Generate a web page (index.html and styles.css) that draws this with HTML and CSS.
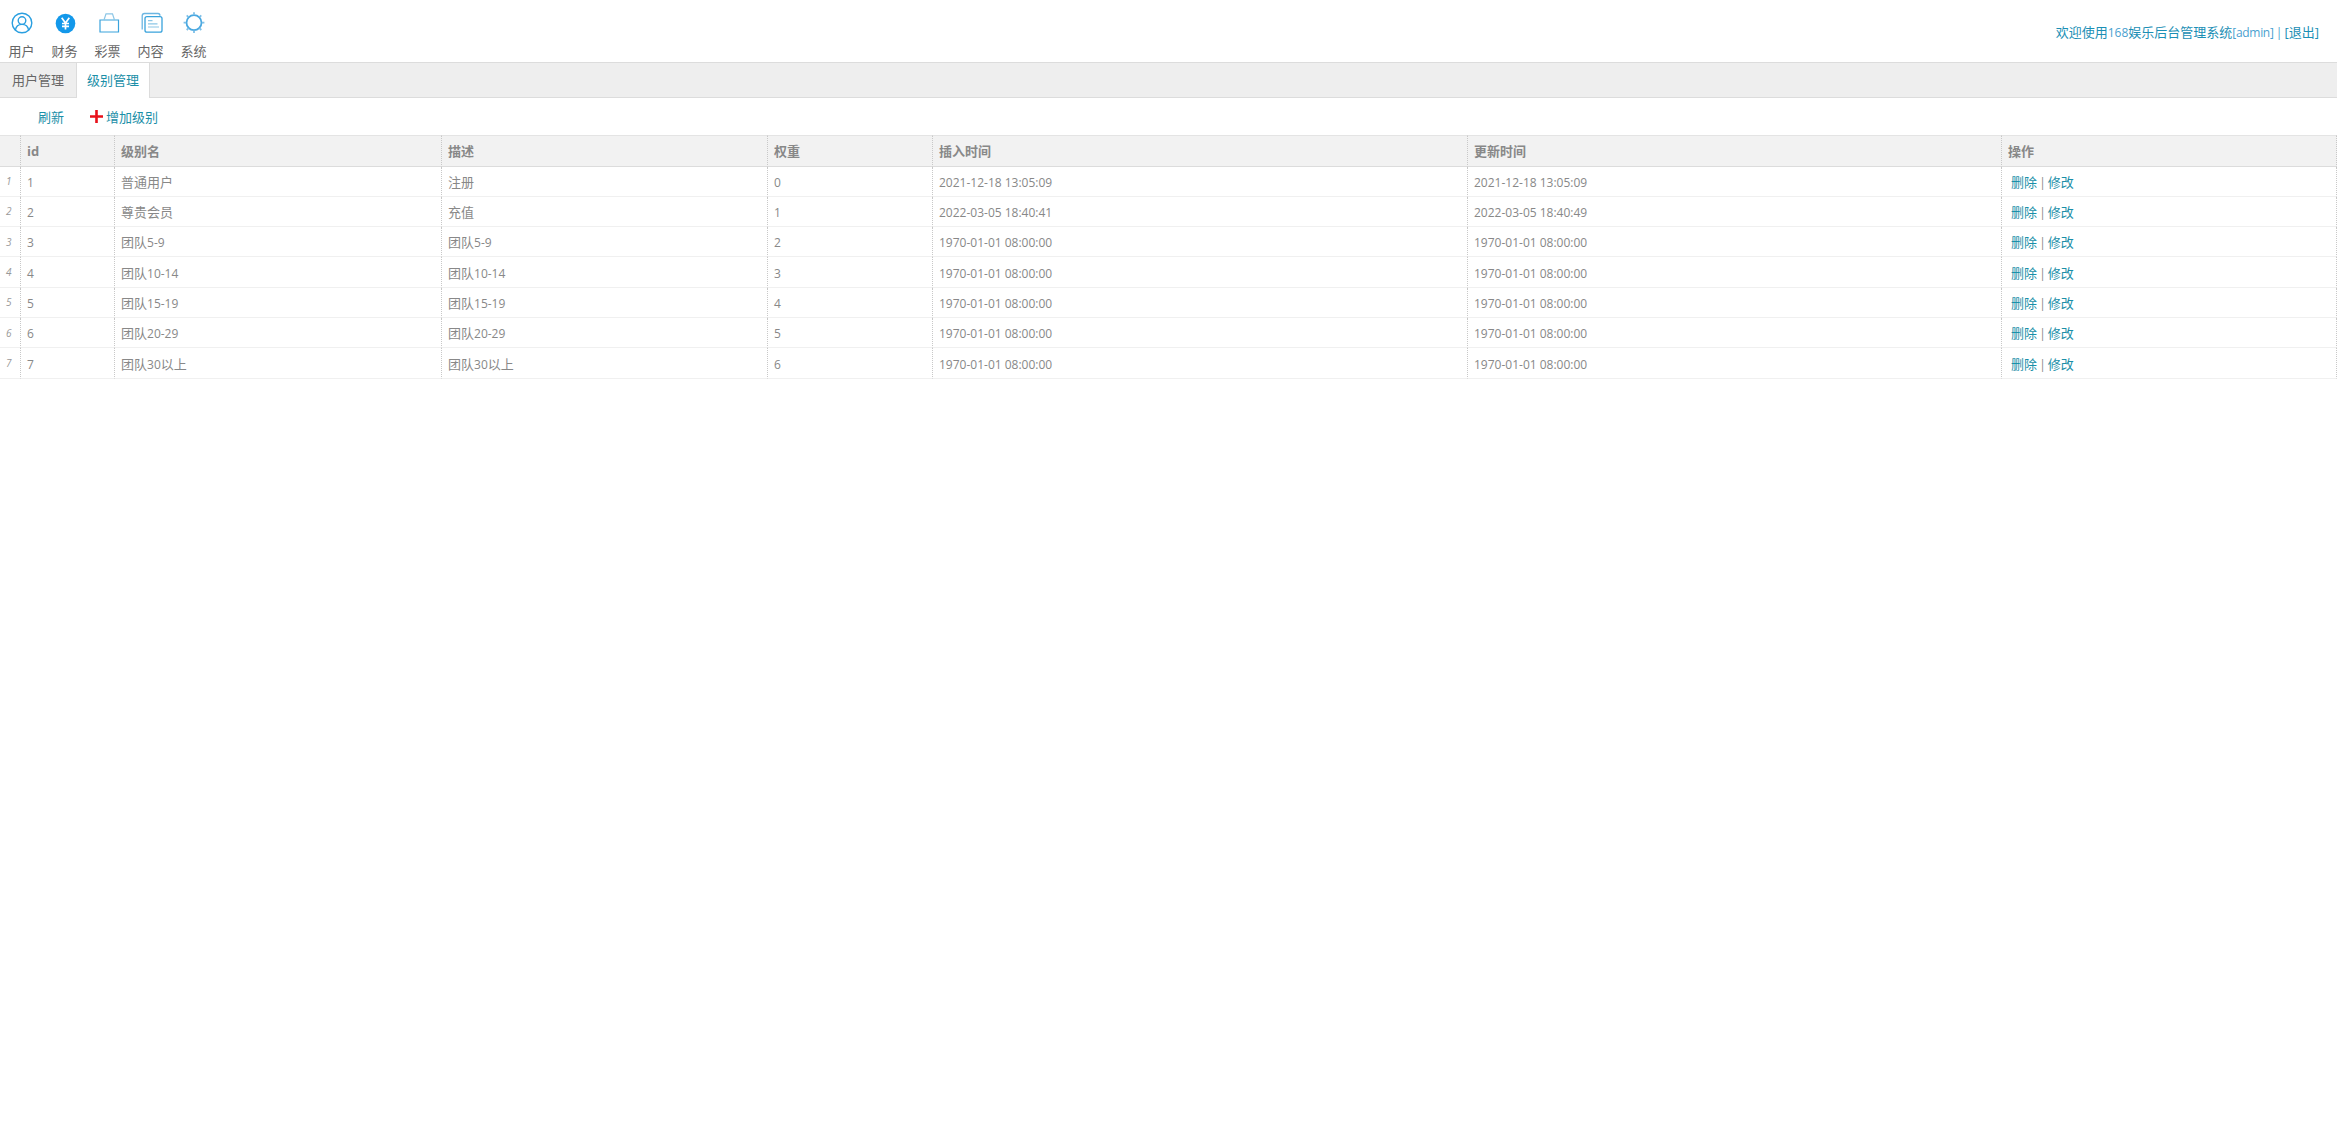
FILE: index.html
```html
<!DOCTYPE html>
<html lang="zh-CN">
<head>
<meta charset="utf-8">
<title>级别管理</title>
<link rel="stylesheet" href="styles.css">
</head>
<body>
<header class="top">
  <nav class="nav">
    <a class="nav-item"><svg class="ico" viewBox="0 0 22 22"><circle cx="11" cy="11" r="9.800" fill="none" stroke="#2a9fe0" stroke-width="1.400"/><circle cx="11" cy="8.600" r="3.800" fill="none" stroke="#2a9fe0" stroke-width="1.400"/><path d="M4.400 18.200c.6-3.800 3-5.800 6.600-5.800s6 2 6.600 5.800" fill="none" stroke="#2a9fe0" stroke-width="1.400"/></svg><span>用户</span></a>
    <a class="nav-item"><svg class="ico" viewBox="0 0 22 22"><circle cx="11.500" cy="11.500" r="9.800" fill="#1398ea"/><path d="M7.700 5.800l3.800 5.200 3.800-5.200M11.500 11v6.500M8 11.500h7M8 14.300h7" fill="none" stroke="#fff" stroke-width="1.700"/></svg><span>财务</span></a>
    <a class="nav-item"><svg class="ico" viewBox="0 0 22 22"><path d="M3 8h18.500v12H3z" fill="none" stroke="#3aa3dc" stroke-width="1.200"/><path d="M7 8l2-6.200h6.500l2 6.200" fill="none" stroke="#8cc6e6" stroke-width="1.200"/></svg><span>彩票</span></a>
    <a class="nav-item"><svg class="ico" viewBox="0 0 22 22"><path d="M2.200 17.500V3.800q0-2.300 2.300-2.300h13.500q2 0 2 2.300" fill="none" stroke="#6cb6e2" stroke-width="1.300"/><rect x="5" y="4.600" width="17" height="15.600" rx="2" fill="none" stroke="#3aa3dc" stroke-width="1.300"/><path d="M8 8.600h4.500M8 11.800h9.500M8 15h11" fill="none" stroke="#8cc6e6" stroke-width="1.200"/></svg><span>内容</span></a>
    <a class="nav-item"><svg class="ico" viewBox="0 0 22 22"><circle cx="11" cy="10.700" r="7.500" fill="none" stroke="#4aa8e0" stroke-width="1.800"/><path d="M11 .3v2.500M11 18.600v2.500M.6 10.700h2.500M18.900 10.700h2.500M3.700 3.400l1.800 1.800M16.500 16.200l1.800 1.800M3.700 18l1.800-1.800M16.500 5.200l1.800-1.800" fill="none" stroke="#7fc0e8" stroke-width="1.800"/></svg><span>系统</span></a>
  </nav>
  <div class="welcome">欢迎使用<span class="lite">168</span>娱乐后台管理系统<span class="lite lite-tight">[admin] | </span>[退出]</div>
</header>
<div class="tabs">
  <a class="tab">用户管理</a>
  <a class="tab tab-on">级别管理</a>
</div>
<div class="tools">
  <a class="tool tool-refresh">刷新</a>
  <a class="tool"><svg class="plus" viewBox="0 0 13 13"><path d="M6.500 0v13M0 6.500h13" stroke="#e8101a" stroke-width="2.600"/></svg>增加级别</a>
</div>
<table class="grid">
  <colgroup>
    <col class="c0"><col class="c1"><col class="c2"><col class="c3"><col class="c4"><col class="c5"><col class="c6"><col>
  </colgroup>
  <thead>
    <tr><th></th><th>id</th><th>级别名</th><th>描述</th><th>权重</th><th>插入时间</th><th>更新时间</th><th>操作</th></tr>
  </thead>
  <tbody>
    <tr><td class="num">1</td><td class="n">1</td><td>普通用户</td><td>注册</td><td class="n">0</td><td class="n">2021-12-18 13:05:09</td><td class="n">2021-12-18 13:05:09</td><td class="ops"><a>删除</a> | <a>修改</a></td></tr>
    <tr><td class="num">2</td><td class="n">2</td><td>尊贵会员</td><td>充值</td><td class="n">1</td><td class="n">2022-03-05 18:40:41</td><td class="n">2022-03-05 18:40:49</td><td class="ops"><a>删除</a> | <a>修改</a></td></tr>
    <tr><td class="num">3</td><td class="n">3</td><td>团队<span class="n">5-9</span></td><td>团队<span class="n">5-9</span></td><td class="n">2</td><td class="n">1970-01-01 08:00:00</td><td class="n">1970-01-01 08:00:00</td><td class="ops"><a>删除</a> | <a>修改</a></td></tr>
    <tr><td class="num">4</td><td class="n">4</td><td>团队<span class="n">10-14</span></td><td>团队<span class="n">10-14</span></td><td class="n">3</td><td class="n">1970-01-01 08:00:00</td><td class="n">1970-01-01 08:00:00</td><td class="ops"><a>删除</a> | <a>修改</a></td></tr>
    <tr><td class="num">5</td><td class="n">5</td><td>团队<span class="n">15-19</span></td><td>团队<span class="n">15-19</span></td><td class="n">4</td><td class="n">1970-01-01 08:00:00</td><td class="n">1970-01-01 08:00:00</td><td class="ops"><a>删除</a> | <a>修改</a></td></tr>
    <tr><td class="num">6</td><td class="n">6</td><td>团队<span class="n">20-29</span></td><td>团队<span class="n">20-29</span></td><td class="n">5</td><td class="n">1970-01-01 08:00:00</td><td class="n">1970-01-01 08:00:00</td><td class="ops"><a>删除</a> | <a>修改</a></td></tr>
    <tr><td class="num">7</td><td class="n">7</td><td>团队<span class="n">30</span>以上</td><td>团队<span class="n">30</span>以上</td><td class="n">6</td><td class="n">1970-01-01 08:00:00</td><td class="n">1970-01-01 08:00:00</td><td class="ops"><a>删除</a> | <a>修改</a></td></tr>
  </tbody>
</table>
</body>
</html>
```
FILE: styles.css
```css
* { box-sizing: border-box; }
html, body { margin: 0; padding: 0; background: #fff; }
body { font-family: "Open Sans", "Noto Sans CJK SC", sans-serif; font-size: 13px; color: #888; overflow: hidden; }

.top { display: flex; justify-content: space-between; height: 62px; }
.nav { display: flex; }
.nav-item { width: 43px; height: 62px; display: flex; flex-direction: column; align-items: center; padding-top: 12px; font-size: 13px; line-height: 18px; color: #666; }
.ico { width: 22px; height: 22px; display: block; margin-bottom: 8px; overflow: visible; }
.welcome { font-size: 13px; line-height: 18px; color: #1b8fb5; padding: 23px 18px 0 0; }
.lite { font-size: 12px; color: #4a9fd0; }
.lite-tight { letter-spacing: -.3px; word-spacing: -.5px; }

.tabs { display: flex; height: 36px; background: #eeeeee; border-top: 1px solid #dcdcdc; border-bottom: 1px solid #dcdcdc; }
.tab { width: 76px; font-size: 13px; line-height: 34px; text-align: center; color: #666; }
.tab-on { width: 74px; height: 35px; background: #fff; color: #1b8fa8; border-left: 1px solid #dcdcdc; border-right: 1px solid #dcdcdc; }

.tools { display: flex; align-items: center; height: 37px; padding-left: 38px; font-size: 13px; color: #1b8fa8; }
.tool { display: flex; align-items: center; }
.tool-refresh { margin-right: 26px; }
.plus { width: 13px; height: 13px; margin-right: 3px; }

.grid { width: 2337px; table-layout: fixed; border-collapse: separate; border-spacing: 0; }
.c0 { width: 21px; }
.c1 { width: 94px; }
.c2 { width: 327px; }
.c3 { width: 326px; }
.c4 { width: 165px; }
.c5 { width: 535px; }
.c6 { width: 534px; }
.grid th, .grid td { padding: 0 0 0 6px; border-right: 1px dotted #c8c8c8; text-align: left; white-space: nowrap; overflow: hidden; }
.grid th { height: 31.500px; background: #f2f2f2; border-top: 1px solid #e4e4e4; border-bottom: 1px solid #dcdcdc; font-size: 13px; font-weight: 700; color: #888; }
.grid td { height: 30.330px; font-size: 13px; border-bottom: 1px solid #f0f0f0; }
.grid td .n { font-size: 12px; }
.grid td.n { font-size: 12px; padding-top: 2px; }
.grid td.num { font-size: 10px; font-style: italic; color: #999; }
.grid td.ops { padding-left: 9px; font-size: 12px; word-spacing: -1px; color: #888; }
.ops a { color: #1b8fa8; font-size: 13px; }
```
